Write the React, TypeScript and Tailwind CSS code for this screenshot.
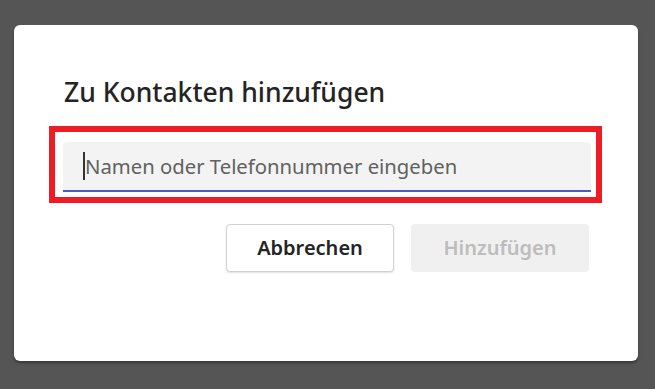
import React from "react";

export default function App() {
  return (
    <div className="w-[655px] h-[389px] bg-[#555555] pt-[25px] pl-[14px]" style={{ fontFamily: '"Noto Sans", "Open Sans", sans-serif' }}>
      <div className="w-[624px] h-[336px] bg-white rounded-[6px] shadow-[0_2px_3px_rgba(0,0,0,0.35)] flex flex-col">
        <div className="pl-[50px] pt-[50px] h-[101px] text-[26.5px] leading-[34px] font-medium text-[#242424]">
          Zu Kontakten hinzufügen
        </div>
        <div className="ml-[35px] w-[553px] h-[77px] border-[6px] border-[#ee1c25] pl-[8px] pr-[5px] pt-[10px]">
          <div className="h-[50px] bg-[#f3f3f3] rounded-t-[4px] border-b-2 border-[#5257c4] flex items-center pl-[20px]">
            <span className="w-[2px] h-[28px] bg-[#333]"></span>
            <span className="text-[20.3px] text-[#616161]">Namen oder Telefonnummer eingeben</span>
          </div>
        </div>
        <div className="flex justify-end gap-[17px] mt-[21px] pr-[49px]">
          <button className="w-[168px] h-[48px] rounded-[4px] border border-[#d1d1d1] bg-white text-[20px] font-semibold text-[#242424] shadow-[0_1px_2px_rgba(0,0,0,0.12)]">
            Abbrechen
          </button>
          <button className="w-[178px] h-[48px] rounded-[4px] bg-[#f0f0f0] text-[20px] font-semibold text-[#bdbdbd]">
            Hinzufügen
          </button>
        </div>
      </div>
    </div>
  );
}
